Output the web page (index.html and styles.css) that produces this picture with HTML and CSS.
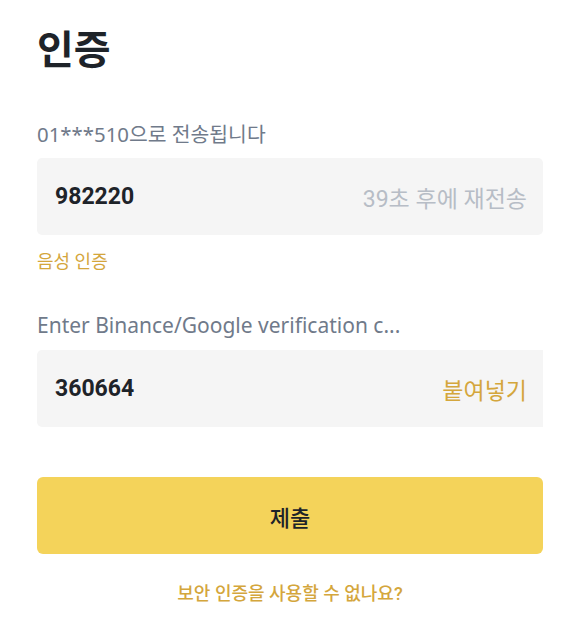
FILE: index.html
```html
<!DOCTYPE html>
<html lang="ko">
<head>
<meta charset="utf-8">
<link rel="stylesheet" href="styles.css">
</head>
<body>
<main class="page">
  <h1 class="title">인증</h1>
  <p class="label">01***510으로 전송됩니다</p>
  <div class="field">
    <span class="value">982220</span>
    <span class="hint">39초 후에 재전송</span>
  </div>
  <a class="link voice">음성 인증</a>
  <p class="label label-2">Enter Binance/Google verification c...</p>
  <div class="field field-cut">
    <span class="value">360664</span>
    <span class="paste">붙여넣기</span>
  </div>
  <button class="submit">제출</button>
  <a class="link help">보안 인증을 사용할 수 없나요?</a>
</main>
</body>
</html>
```
FILE: styles.css
```css
* { box-sizing: border-box; }
html, body { margin: 0; padding: 0; background: #fff; }
body {
  font-family: Roboto, "Noto Sans CJK KR", sans-serif;
  color: #1e2329;
}
.page {
  padding: 26px 37px 0 37px;
  display: flex;
  flex-direction: column;
}
.title {
  margin: 0;
  font-size: 40px;
  line-height: 50px;
  font-weight: 700;
  color: #1e2329;
}
.label {
  margin: 0;
  margin-top: 44px;
  font-family: "Noto Sans", "Noto Sans CJK KR", sans-serif;
  font-size: 20.4px;
  line-height: 28px;
  color: #707a8a;
}
.label-2 { margin-top: 37px; font-size: 21px; }
.field {
  margin-top: 10px;
  height: 77px;
  background: #f5f5f5;
  border-radius: 5px;
  display: flex;
  align-items: center;
  justify-content: space-between;
  padding: 0 16px 0 18px;
}
.field-cut { margin-top: 11px; border-radius: 5px 0 0 5px; }
.value {
  font-size: 23px;
  font-weight: 700;
  color: #1e2329;
}
.hint {
  font-size: 23px;
  color: #b7bdc6;
}
.paste {
  font-size: 23px;
  color: #d4a63c;
}
.link {
  color: #d4a63c;
  font-size: 18px;
  line-height: 24px;
  text-decoration: none;
}
.voice { margin-top: 15px; align-self: flex-start; }
.submit {
  margin-top: 50px;
  height: 77px;
  border: none;
  border-radius: 6px;
  background: #f4d35a;
  color: #1e2329;
  font-family: inherit;
  font-size: 22px;
  font-weight: 500;
}
.help {
  margin-top: 28px;
  align-self: center;
  font-weight: 500;
}
```
